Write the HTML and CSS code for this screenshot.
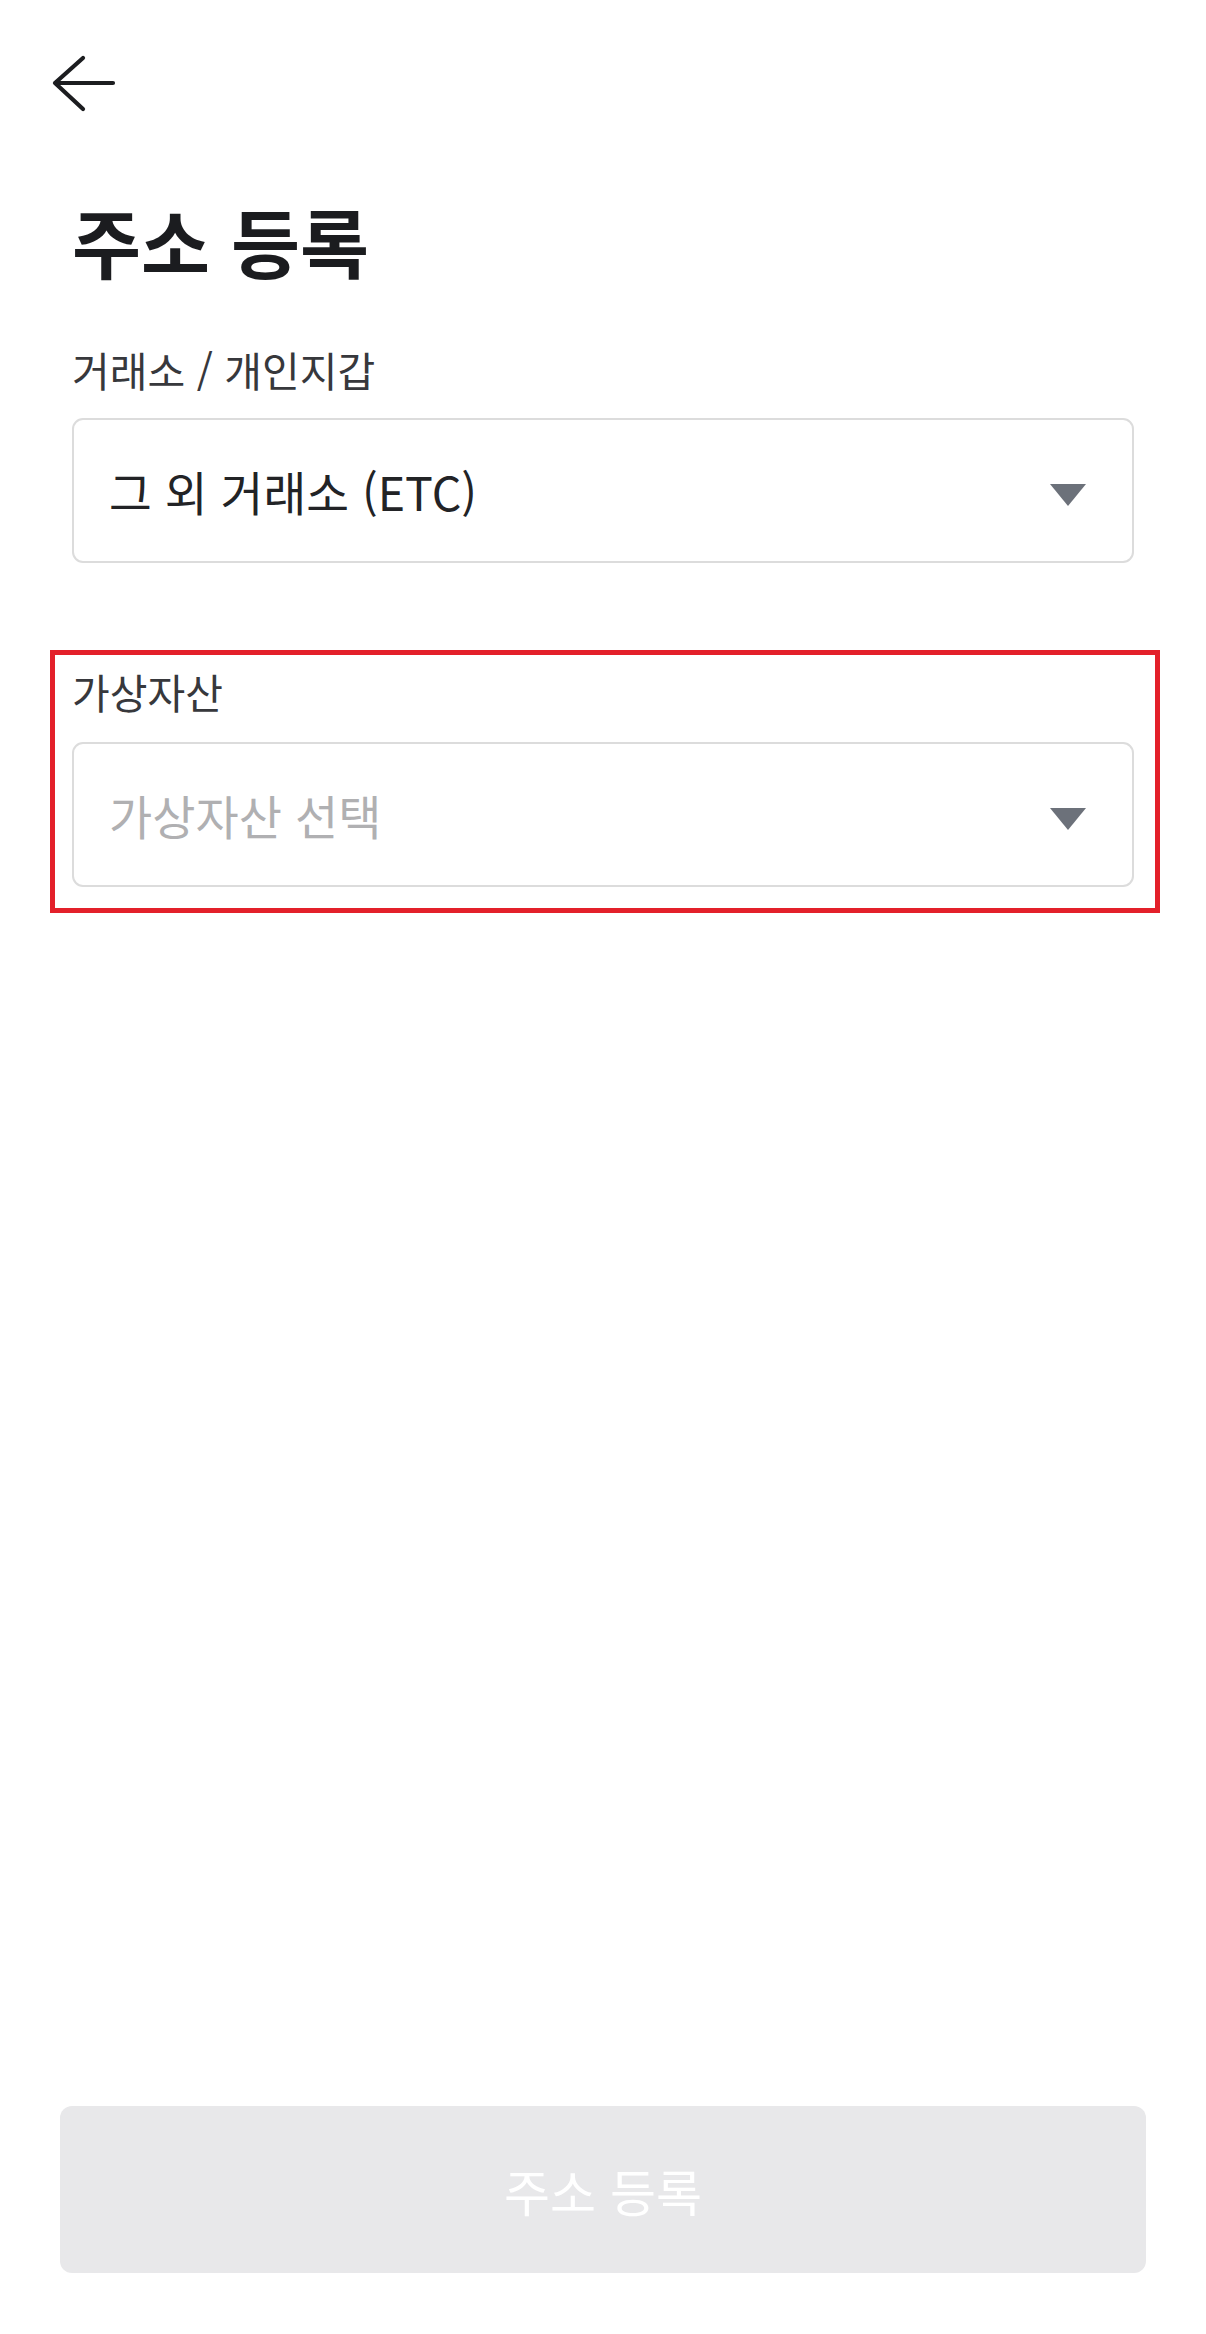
FILE: index.html
```html
<!DOCTYPE html>
<html lang="ko">
<head>
<meta charset="utf-8">
<title>주소 등록</title>
<link rel="stylesheet" href="styles.css">
</head>
<body>
<div class="page">
  <header class="topbar">
    <svg class="back" width="66" height="60" viewBox="0 0 66 60" aria-label="뒤로">
      <path d="M63 29 H5 M5 29 L33 4 M5 29 L33 55" fill="none" stroke="#1c1d20" stroke-width="4.2" stroke-linecap="round" stroke-linejoin="round"/>
    </svg>
  </header>
  <main class="content">
    <h1 class="title">주소 등록</h1>
    <div class="field">
      <div class="label">거래소 / 개인지갑</div>
      <div class="select">
        <span class="value">그 외 거래소 (ETC)</span>
        <span class="caret"></span>
      </div>
    </div>
    <div class="field highlight">
      <div class="label">가상자산</div>
      <div class="select">
        <span class="value placeholder">가상자산 선택</span>
        <span class="caret"></span>
      </div>
    </div>
  </main>
  <footer class="footer">
    <button class="submit" type="button" disabled>주소 등록</button>
  </footer>
</div>
</body>
</html>
```
FILE: styles.css
```css
* { box-sizing: border-box; }
html, body { margin: 0; padding: 0; background: #ffffff; }
body {
  font-family: "Noto Sans CJK KR", "Noto Sans", sans-serif;
  color: #1c1d20;
}
.page {
  min-height: 2334px;
  display: flex;
  flex-direction: column;
}
.topbar {
  padding: 54px 0 0 50px;
  height: 114px;
}
.back { display: block; }
.content {
  padding: 0 72px;
  display: flex;
  flex-direction: column;
}
.title {
  margin: 84px 0 0 0;
  font-size: 75px;
  line-height: 86px;
  font-weight: 700;
  color: #1b1c1f;
}
.field {
  display: flex;
  flex-direction: column;
  gap: 26px;
}
.field:first-of-type { margin-top: 62px; }
.label {
  font-size: 41px;
  line-height: 46px;
  color: #37383c;
}
.select {
  height: 145px;
  border: 2px solid #dcdcdc;
  border-radius: 11px;
  display: flex;
  align-items: center;
  justify-content: space-between;
  padding: 0 46px 0 35px;
}
.value {
  font-size: 46.5px;
  line-height: 56px;
  color: #222326;
}
.placeholder { color: #b0b0b2; font-size: 47px; }
.caret {
  width: 0;
  height: 0;
  border-left: 18px solid transparent;
  border-right: 18px solid transparent;
  border-top: 22px solid #6c717a;
  margin-top: 8px;
}
.highlight {
  margin: 87px -26px 0 -22px;
  padding: 13px 21px 21px 17px;
  border: 5px solid #e3202a;
  gap: 28px;
}
.footer {
  margin-top: auto;
  padding: 0 60px 61px 60px;
}
.submit {
  display: block;
  width: 100%;
  height: 167px;
  border: 0;
  border-radius: 12px;
  background: #e8e8ea;
  color: #ffffff;
  font-family: "Noto Sans CJK KR", "Noto Sans", sans-serif;
  font-size: 50px;
  line-height: 60px;
  padding: 0;
}
```
